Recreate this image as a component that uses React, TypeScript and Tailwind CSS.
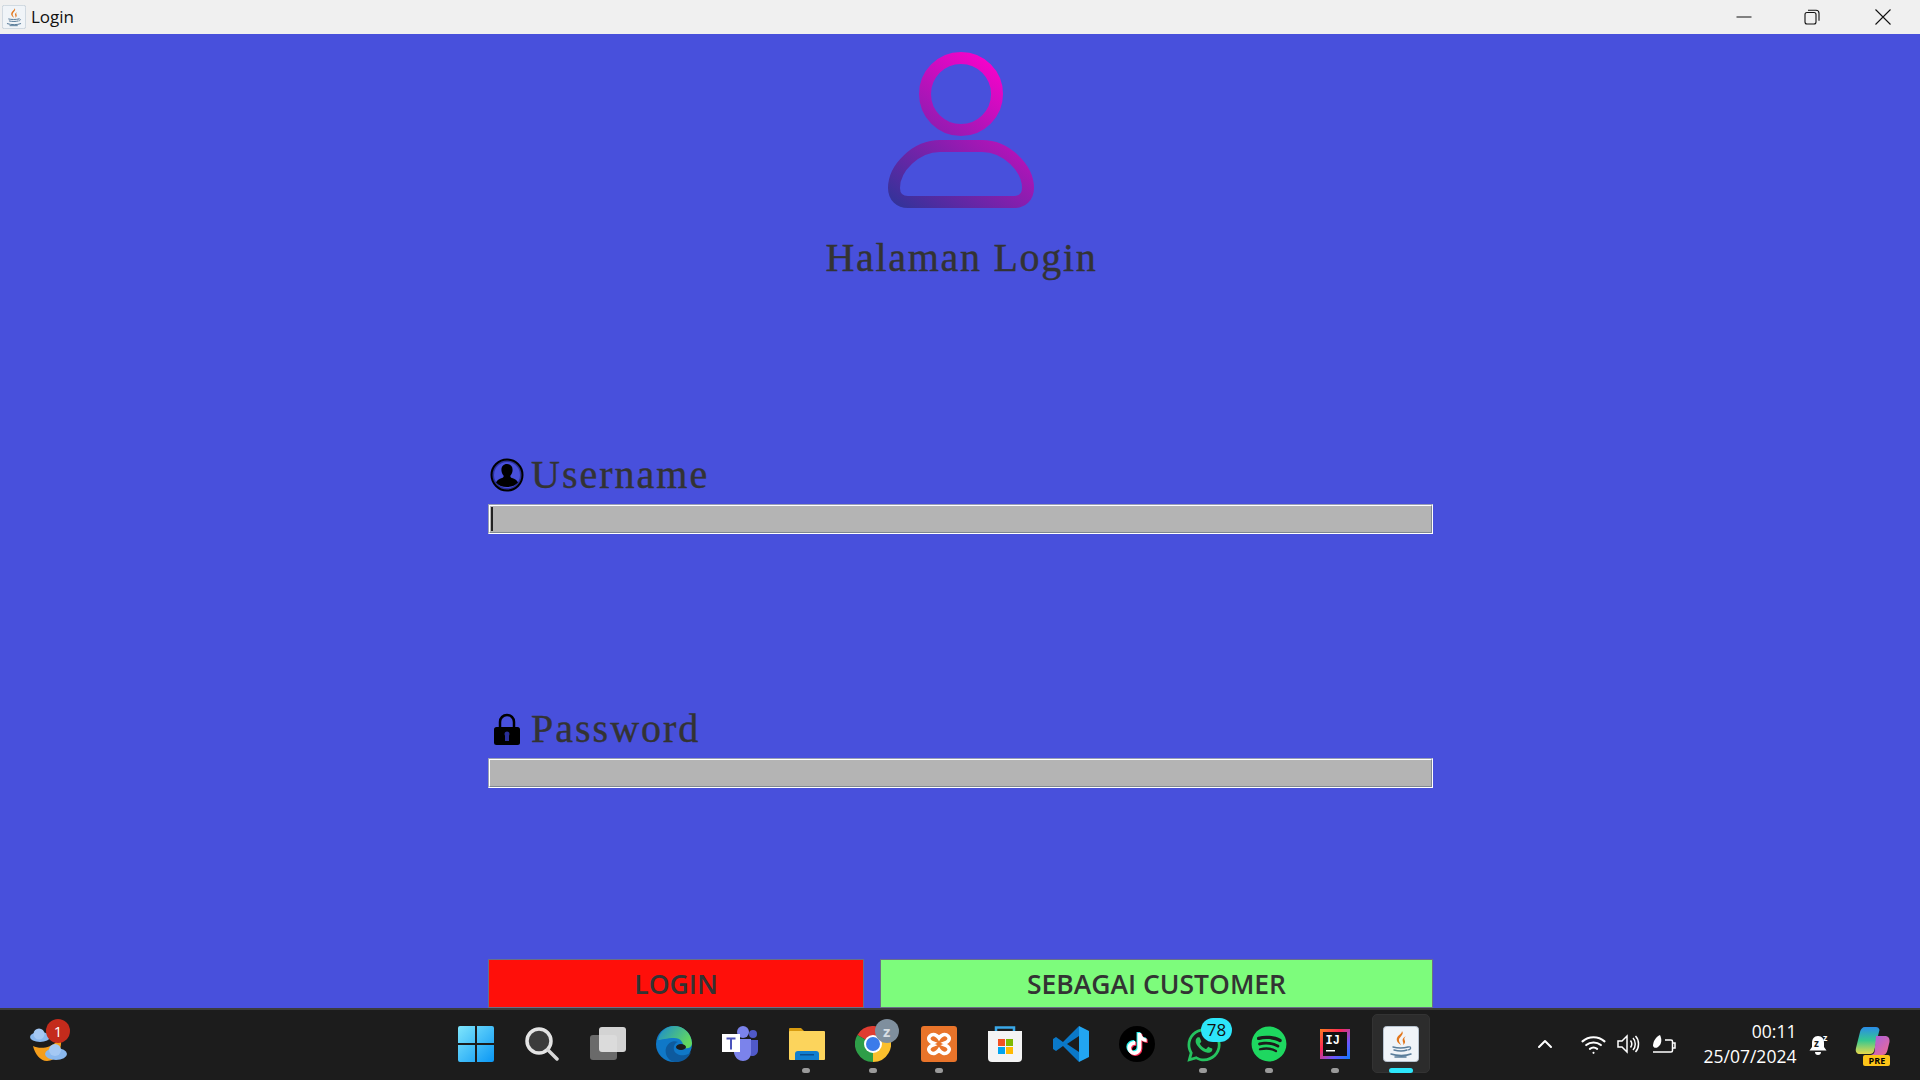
import { type ReactNode } from "react";
import { FaTiktok, FaSpotify, FaWhatsapp } from "react-icons/fa";
import { FiChevronUp, FiWifi } from "react-icons/fi";

const serifFont = "[font-family:'Liberation_Serif',serif]";

function JavaIcon({ size }: { size: number }) {
    return (
        <svg width={size} height={size} viewBox="0 0 36 36">
            <rect x="0.5" y="0.5" width="35" height="35" rx="3" fill="#f0f4f8" stroke="#b8c4d0" />
            <path d="M19 5c3 4-4 6-3 10 .4 2 2 3 2 4-3-2-5-4-4-7 1-3 5-4 5-7zM23 10c-3 2-4 3-3 6 .4 1 .6 2 0 3 3-2 2-4 1.400-5.500-.4-1.500.6-2.500 1.600-3.500z" fill="#e2761b" />
            <path d="M10 21c4 1 11 1 15 0M11 24c4 1 10 1 13 0M8 28c6 2 15 2 20 0M12 31h11" stroke="#5a7d9a" strokeWidth="1.500" fill="none" strokeLinecap="round" />
            <path d="M25 21c3-1 4 2 0 3" stroke="#5a7d9a" strokeWidth="1.200" fill="none" />
        </svg>
    );
}

function WindowControls() {
    return (
        <div className="flex items-center">
            <div className="flex w-[68px] justify-center">
                <svg width="16" height="16" viewBox="0 0 16 16"><path d="M0.500 8h15" stroke="#111" strokeWidth="1" /></svg>
            </div>
            <div className="flex w-[68px] justify-center">
                <svg width="16" height="16" viewBox="0 0 16 16" fill="none" stroke="#111" strokeWidth="1.100">
                    <rect x="1" y="3.500" width="11" height="11.500" rx="2" />
                    <path d="M4 1.200h8c2 0 3 1 3 3v7.500" />
                </svg>
            </div>
            <div className="flex w-[74px] justify-center">
                <svg width="16" height="16" viewBox="0 0 16 16"><path d="M0.500 0.500l15 15M15.500 0.500l-15 15" stroke="#111" strokeWidth="1.100" /></svg>
            </div>
        </div>
    );
}

function TitleBar() {
    return (
        <div className="flex h-[34px] shrink-0 items-center justify-between bg-[#f0f0f0]">
            <div className="flex items-center gap-[5px] pl-[2px]">
                <JavaIcon size={24} />
                <span className="text-[17px] text-[#111] [font-family:'Open_Sans',sans-serif]">Login</span>
            </div>
            <WindowControls />
        </div>
    );
}

function Logo() {
    return (
        <svg width="146" height="156" viewBox="0 0 146 156" fill="none" className="ml-[2px]">
            <defs>
                <linearGradient id="logoGrad" gradientUnits="userSpaceOnUse" x1="115" y1="8" x2="12" y2="156">
                    <stop offset="0" stopColor="#ff00cc" />
                    <stop offset="1" stopColor="#333399" />
                </linearGradient>
            </defs>
            <circle cx="73" cy="42" r="36" stroke="url(#logoGrad)" strokeWidth="12" />
            <path
                d="M52 94H94C118 94 140 116 140 136C140 145 134 150 126 150H20C12 150 6 145 6 136C6 116 28 94 52 94Z"
                stroke="url(#logoGrad)"
                strokeWidth="12"
            />
        </svg>
    );
}

function UserBadgeIcon() {
    return (
        <svg width="34" height="34" viewBox="0 0 34 34">
            <circle cx="17" cy="17" r="15.500" fill="#2a2f9a" stroke="#000" strokeWidth="2" />
            <circle cx="17" cy="17" r="13" fill="#4850dc" />
            <path d="M17 6c4 0 6 3 5.500 7-.3 2-1.200 3.500-2 4.500-.4 1 0 2 1.500 2.500 3 1 5 2 6 4.500-2.500 3-6.500 4.500-11 4.500s-8.500-1.500-11-4.500c1-2.500 3-3.500 6-4.500 1.500-.5 1.900-1.500 1.500-2.500-.8-1-1.700-2.500-2-4.500C11 9 13 6 17 6z" fill="#000" />
        </svg>
    );
}

function LockIcon() {
    return (
        <svg width="34" height="34" viewBox="0 0 34 34">
            <path d="M10 16V10c0-4 3-7 7-7s7 3 7 7v6" fill="none" stroke="#000" strokeWidth="2.500" />
            <rect x="4" y="15" width="26" height="18" rx="2.500" fill="#000" />
            <circle cx="17" cy="22" r="2.500" fill="#2a2f9a" />
            <rect x="15" y="23" width="4" height="6" fill="#2a2f9a" />
        </svg>
    );
}

function Field({ icon, label, focused }: { icon: ReactNode; label: string; focused?: boolean }) {
    return (
        <div className="flex flex-col">
            <div className="flex h-[48px] items-center gap-[7px] pl-[2px]">
                {icon}
                <span className={`${serifFont} text-[40px] leading-none tracking-[2px] text-[#333] [-webkit-text-stroke:0.4px_#333]`}>{label}</span>
            </div>
            <div className="mt-[5px] flex h-[30px] border border-t-[#9aa0b4] border-l-[#9aa0b4] border-r-white border-b-white">
                <div className="flex flex-1 border border-t-white border-l-white border-r-[#7f8890] border-b-[#7f8890] bg-[#b4b4b4] pl-[1px]">
                    {focused && <div className="my-[1px] w-[2px] bg-[#222]" />}
                </div>
            </div>
        </div>
    );
}

function LoginPanel() {
    return (
        <div className="flex flex-1 flex-col items-center bg-[#4850dc] pt-[18px]">
            <Logo />
            <h1 className={`${serifFont} ml-[3px] mt-[26px] text-[40px] leading-[48px] tracking-[1.7px] text-[#333] [-webkit-text-stroke:0.4px_#333]`}>Halaman Login</h1>
            <div className="ml-[1px] mt-[169px] flex w-[945px] flex-1 flex-col">
                <Field icon={<UserBadgeIcon />} label="Username" focused />
                <div className="mt-[171px]">
                    <Field icon={<LockIcon />} label="Password" />
                </div>
                <div className="mt-auto flex h-[49px] justify-between text-[26.500px] text-[#333] [font-family:'Comic_Sans_MS','Open_Sans',sans-serif] font-semibold">
                    <div className="flex w-[376px] items-center justify-center border border-[#6a6f88] bg-[#ff0f0a] pt-[3px]">LOGIN</div>
                    <div className="flex w-[553px] items-center justify-center border border-[#6a6f88] bg-[#7dfc7c] pt-[3px]">SEBAGAI CUSTOMER</div>
                </div>
            </div>
        </div>
    );
}

function WeatherIcon() {
    return (
        <div className="relative h-[36px] w-[40px]">
            <svg width="40" height="36" viewBox="0 0 40 36">
                <path d="M5 20c6 3 17 3 24-5l4-1c1 10-5 21-14 21-7 0-12-7-14-15z" fill="#f59e1c" />
                <ellipse cx="12" cy="11" rx="10" ry="5" fill="#8ab8ee" />
                <circle cx="11" cy="8" r="5.500" fill="#a4c8f4" />
                <ellipse cx="28" cy="28" rx="11" ry="6" fill="#8ab8ee" />
                <circle cx="27" cy="24" r="6" fill="#a4c8f4" />
            </svg>
            <div className="absolute right-[-2px] top-[-7px] flex h-[24px] w-[24px] items-center justify-center rounded-full bg-[#c42b1c] text-[15px] text-white [font-family:'Open_Sans',sans-serif]">1</div>
        </div>
    );
}

function WindowsIcon() {
    return (
        <svg width="36" height="36" viewBox="0 0 36 36">
            <defs>
                <linearGradient id="winGrad" x1="0" y1="0" x2="1" y2="1">
                    <stop offset="0" stopColor="#7fe6fc" />
                    <stop offset="1" stopColor="#0a97f5" />
                </linearGradient>
            </defs>
            <path d="M2 0h15v17H0V2a2 2 0 0 1 2-2zM19 0h15a2 2 0 0 1 2 2v15H19zM0 19h17v17H2a2 2 0 0 1-2-2zM19 19h17v15a2 2 0 0 1-2 2H19z" fill="url(#winGrad)" />
        </svg>
    );
}

function SearchIcon() {
    return (
        <svg width="34" height="34" viewBox="0 0 34 34" fill="none">
            <circle cx="14" cy="14" r="12" fill="#3c3c3c" stroke="#e4e4e4" strokeWidth="3.500" />
            <path d="M23 23l9 9" stroke="#d8d8d8" strokeWidth="3.500" strokeLinecap="round" />
        </svg>
    );
}

function TaskViewIcon() {
    return (
        <svg width="36" height="36" viewBox="0 0 36 36">
            <rect x="0" y="9" width="27" height="25" rx="3" fill="#6a6a6a" />
            <rect x="9" y="1" width="27" height="25" rx="3" fill="#e8e8e8" fillOpacity="0.900" />
        </svg>
    );
}

function EdgeIcon() {
    return (
        <svg width="36" height="36" viewBox="0 0 36 36">
            <defs>
                <linearGradient id="edgeTop" x1="0" y1="0" x2="1" y2="0.500">
                    <stop offset="0" stopColor="#1a8ad0" />
                    <stop offset="1" stopColor="#62d860" />
                </linearGradient>
            </defs>
            <circle cx="18" cy="18" r="18" fill="#0f78c8" />
            <path d="M2 14C4 5 11 0 18 0c9 0 17 6 18 17 0 5-5 6-9 5 1-5-2-10-9-10-7 0-13 2-16 2z" fill="url(#edgeTop)" />
            <path d="M22 36c-8 1-14-6-12-14 2-5 7-8 12-6-3 1-5 4-4 8 1 4 6 6 11 5 3-.5 5-2 6-3-2 5-6 9-13 10z" fill="#0d5a9e" />
            <ellipse cx="25" cy="21" rx="5" ry="3" fill="#1c1c1c" />
        </svg>
    );
}

function TeamsIcon() {
    return (
        <svg width="36" height="36" viewBox="0 0 36 36">
            <circle cx="31" cy="8" r="4" fill="#5059c9" />
            <path d="M26 14h10v10c0 4-3 6-6 6-2 0-4-1-4-3z" fill="#5059c9" />
            <circle cx="21" cy="6" r="6" fill="#7b83eb" />
            <path d="M12 13h17v14c0 5-4 8-8 8s-8-3-9-8z" fill="#7b83eb" />
            <rect x="0" y="8" width="18" height="18" fill="#fff" />
            <path d="M4.500 11.500h9v2h-3.500v10h-2v-10h-3.500z" fill="#4b53bc" />
        </svg>
    );
}

function FolderIcon() {
    return (
        <svg width="36" height="36" viewBox="0 0 36 36">
            <path d="M0 3a1 1 0 0 1 1-1h11l4 4h-16z" fill="#d89c10" />
            <rect x="0" y="5" width="36" height="29" rx="1" fill="#fcd45c" />
            <path d="M6 34v-6c0-2 1-3 3-3h18c2 0 3 1 3 3v6z" fill="#0f7ed0" />
            <rect x="11" y="28" width="14" height="1.500" fill="#0a4e90" />
        </svg>
    );
}

function ChromeIcon() {
    return (
        <div className="relative h-[36px] w-[36px]">
            <svg width="36" height="36" viewBox="0 0 36 36">
                <path d="M18 18L2.400 9A18 18 0 0 1 33.600 9z" fill="#e03c31" />
                <path d="M18 18L33.600 9A18 18 0 0 1 18 36z" fill="#fbc02d" />
                <path d="M18 18L18 36A18 18 0 0 1 2.400 9z" fill="#2e9e48" />
                <circle cx="18" cy="18" r="9" fill="#fff" />
                <circle cx="18" cy="18" r="7" fill="#3b7bea" />
            </svg>
            <div className="absolute right-[-8px] top-[-7px] flex h-[24px] w-[24px] items-center justify-center rounded-full bg-[#7f8f9e] text-[15px] font-bold leading-none text-[#d8dee4] [font-family:'Open_Sans',sans-serif]">z</div>
        </div>
    );
}

function XamppIcon() {
    return (
        <svg width="36" height="36" viewBox="0 0 36 36">
            <rect width="36" height="36" rx="3" fill="#e9742a" />
            <path d="M9 10c3-3 7-1 9 2 2-3 6-5 9-2 3 3 0 6-3 7 1 .5 1 1.500 0 2 3 1 6 4 3 7s-7 1-9-2c-2 3-6 5-9 2s0-6 3-7c-1-.5-1-1.500 0-2-3-1-6-4-3-7z" fill="none" stroke="#fff" strokeWidth="3.500" />
        </svg>
    );
}

function StoreIcon() {
    return (
        <svg width="36" height="36" viewBox="0 0 36 36">
            <path d="M9 6V1.500h18V6" fill="none" stroke="#3aa8e8" strokeWidth="2.500" />
            <path d="M1 5h34v27a4 4 0 0 1-4 4H5a4 4 0 0 1-4-4z" fill="#f4f4f4" />
            <rect x="11" y="13" width="7" height="7" fill="#f25022" />
            <rect x="19" y="13" width="7" height="7" fill="#7fba00" />
            <rect x="11" y="21" width="7" height="7" fill="#00a4ef" />
            <rect x="19" y="21" width="7" height="7" fill="#ffb900" />
        </svg>
    );
}

function VSCodeIcon() {
    return (
        <svg width="36" height="36" viewBox="0 0 36 36">
            <path d="M26 0L36 5v26l-10 5z" fill="#22a5f1" />
            <path d="M26 0L10 16 3 11 0 13v10l3 2 7-5 16 16V26L14 18 26 10z" fill="#0a78c8" />
        </svg>
    );
}

function TikTokIcon() {
    return (
        <div className="flex h-[36px] w-[36px] items-center justify-center rounded-full bg-black">
            <div className="relative h-[22px] w-[22px]">
                <FaTiktok size={22} className="absolute left-[-1px] top-[-1px] text-[#25f4ee]" />
                <FaTiktok size={22} className="absolute left-[1px] top-[1px] text-[#fe2c55]" />
                <FaTiktok size={22} className="absolute left-0 top-0 text-white" />
            </div>
        </div>
    );
}

function WhatsAppIcon() {
    return (
        <div className="relative h-[36px] w-[36px]">
            <FaWhatsapp size={38} className="text-[#25c35f]" />
            <div className="absolute right-[-11px] top-[-8px] flex h-[24px] w-[31px] items-center justify-center rounded-full bg-[#2de6fa] text-[17px] text-[#111] [font-family:'Open_Sans',sans-serif]">78</div>
        </div>
    );
}

function IntelliJIcon() {
    return (
        <svg width="32" height="32" viewBox="0 0 32 32">
            <defs>
                <linearGradient id="ijGrad" x1="0" y1="0" x2="1" y2="1">
                    <stop offset="0" stopColor="#fc801d" />
                    <stop offset="0.350" stopColor="#fe2857" />
                    <stop offset="0.700" stopColor="#6b57ff" />
                    <stop offset="1" stopColor="#087cfa" />
                </linearGradient>
            </defs>
            <rect width="30" height="30" x="1" y="1" fill="url(#ijGrad)" />
            <rect x="4" y="4" width="24" height="24" fill="#111" />
            <text x="6.500" y="16" fontSize="12" fontWeight="700" fill="#fff" fontFamily="Liberation Mono, monospace">IJ</text>
            <rect x="7" y="22" width="9" height="1.500" fill="#fff" />
        </svg>
    );
}

function TaskItem({ children, dot, active }: { children: ReactNode; dot?: boolean; active?: boolean }) {
    return (
        <div className="relative flex h-[70px] w-[66.100px] items-center justify-center pb-[2px]">
            {active && <div className="absolute left-[4px] top-[4px] h-[59px] w-[58px] rounded-[5px] border border-[#333] bg-[#2c2c2c]" />}
            <div className="relative">{children}</div>
            {dot && <div className="absolute bottom-[7px] left-[29px] h-[5px] w-[8px] rounded-full bg-[#9a9a9a]" />}
            {active && <div className="absolute bottom-[7px] left-[21px] h-[5px] w-[24px] rounded-full bg-[#2de6fa]" />}
        </div>
    );
}

function Tray() {
    return (
        <div className="flex items-center pb-[2px] text-white">
            <FiChevronUp size={24} className="ml-[99px]" />
            <FiWifi size={25} className="ml-[24px]" />
            <svg width="24" height="24" viewBox="0 0 24 24" fill="none" stroke="#fff" strokeWidth="1.500" className="ml-[10px]">
                <path d="M2 9v6h4l5 5V4L6 9z" />
                <path d="M14.500 8.500c1.500 2 1.500 5 0 7M17 6c3 3 3 9 0 12M19.500 4c4 4 4 12 0 16" />
            </svg>
            <svg width="26" height="24" viewBox="0 0 26 24" fill="none" stroke="#fff" strokeWidth="1.500" className="ml-[11px]">
                <path d="M2 20h18a1.500 1.500 0 0 0 1.500-1.500v-9A1.500 1.500 0 0 0 20 8h-6M22 11h2v5h-2" />
                <path d="M2 14c0-5 3-9 7-11 2 4 2 9-2 12-2 1.500-4 1-5-1z" fill="#fff" stroke="none" />
            </svg>
            <div className="ml-[14px] flex w-[105px] flex-col items-end text-[17.500px] leading-[25px] [font-family:'Open_Sans',sans-serif]">
                <span>00:11</span>
                <span>25/07/2024</span>
            </div>
            <svg width="24" height="26" viewBox="0 0 24 26" fill="#fff" className="ml-[12px]">
                <path d="M10 5c-4 0-6 3-6 7v4l-2.500 3.500h17L16 16v-4c0-4-2-7-6-7zM7 21a3 3 0 0 0 6 0z" />
                <text x="6" y="16" fontSize="10" fontWeight="700" fill="#1c1c1c" fontFamily="Open Sans, sans-serif">z</text>
                <text x="15" y="10" fontSize="9" fontWeight="700" fontFamily="Open Sans, sans-serif">z</text>
            </svg>
            <div className="relative ml-[23px] h-[36px] w-[36px]">
                <svg width="36" height="30" viewBox="0 0 36 30">
                    <defs>
                        <linearGradient id="copA" x1="0" y1="0" x2="0" y2="1">
                            <stop offset="0" stopColor="#2a8ce8" />
                            <stop offset="0.500" stopColor="#36c890" />
                            <stop offset="1" stopColor="#e8d84a" />
                        </linearGradient>
                        <linearGradient id="copB" x1="0" y1="0" x2="1" y2="1">
                            <stop offset="0" stopColor="#a060e8" />
                            <stop offset="1" stopColor="#f06a90" />
                        </linearGradient>
                    </defs>
                    <path d="M10 1h11c2 0 3 1 3.500 3L19 25c-.5 2-2 3-4 3H5c-3 0-5-2-4-6l4-16c.7-3 2.500-5 5-5z" fill="url(#copA)" />
                    <path d="M21 10h9c3 0 5 2 4.500 6l-2 8c-.5 3-2.500 5-5 5H15c2 0 4-1 4.500-3z" fill="url(#copB)" />
                </svg>
                <div className="absolute bottom-[-4px] left-[8px] flex h-[11px] w-[27px] items-center justify-center rounded-[2px] bg-[#fcc419] text-[9px] font-bold leading-none text-black [font-family:'Open_Sans',sans-serif]">PRE</div>
            </div>
        </div>
    );
}

function Taskbar() {
    return (
        <div className="flex h-[72px] shrink-0 items-center border-t-2 border-[#3c3c3c] bg-[#1c1c1c]">
            <div className="flex w-[443px] pb-[2px] pl-[28px]">
                <WeatherIcon />
            </div>
            <div className="flex">
                <TaskItem><WindowsIcon /></TaskItem>
                <TaskItem><SearchIcon /></TaskItem>
                <TaskItem><TaskViewIcon /></TaskItem>
                <TaskItem><EdgeIcon /></TaskItem>
                <TaskItem><TeamsIcon /></TaskItem>
                <TaskItem dot><FolderIcon /></TaskItem>
                <TaskItem dot><ChromeIcon /></TaskItem>
                <TaskItem dot><XamppIcon /></TaskItem>
                <TaskItem><StoreIcon /></TaskItem>
                <TaskItem><VSCodeIcon /></TaskItem>
                <TaskItem><TikTokIcon /></TaskItem>
                <TaskItem dot><WhatsAppIcon /></TaskItem>
                <TaskItem dot><FaSpotify size={36} className="text-[#1ed760]" /></TaskItem>
                <TaskItem dot><IntelliJIcon /></TaskItem>
                <TaskItem active><JavaIcon size={36} /></TaskItem>
            </div>
            <Tray />
        </div>
    );
}

export default function App() {
    return (
        <div className="flex h-[1080px] w-[1920px] flex-col overflow-hidden">
            <TitleBar />
            <LoginPanel />
            <Taskbar />
        </div>
    );
}
